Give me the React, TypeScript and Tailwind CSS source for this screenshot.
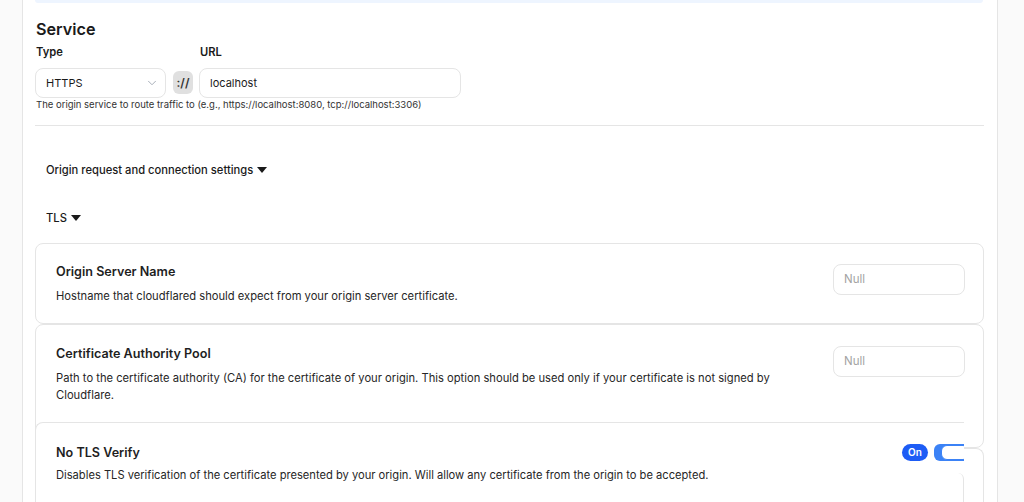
import { ChevronDown } from "lucide-react";

interface Setting {
  title: string;
  description: string;
}

const settings: Setting[] = [
  {
    title: "Origin Server Name",
    description:
      "Hostname that cloudflared should expect from your origin server certificate.",
  },
  {
    title: "Certificate Authority Pool",
    description:
      "Path to the certificate authority (CA) for the certificate of your origin. This option should be used only if your certificate is not signed by Cloudflare.",
  },
];

function Caret() {
  return (
    <svg width="10" height="6" viewBox="0 0 10 6" className="ml-[4px] inline-block">
      <path d="M0 0 L10 0 L5 6 Z" fill="#1a1a1a" />
    </svg>
  );
}

function SettingCard({ setting, tall }: { setting: Setting; tall?: boolean }) {
  return (
    <div
      className={`flex gap-5 rounded-lg border border-[#e5e5e5] bg-white pl-5 pr-[18px] ${
        tall ? "h-[124px] pt-[20px]" : "h-[81px] pt-[19px]"
      }`}
    >
      <div className="flex-1">
        <div className="text-[12.6px] leading-[18px] font-semibold text-[#1f1f1f]">
          {setting.title}
        </div>
        <div className="mt-[7px] text-[11.2px] leading-[17px] text-[#262626]">
          {setting.description}
        </div>
      </div>
      <div className="mt-[1px] flex h-[31px] w-[132px] items-center rounded-lg border border-[#e5e5e5] px-[10px] text-[11.5px] text-[#a3a3a3]">
        Null
      </div>
    </div>
  );
}

export default function App() {
  return (
    <div
      className="flex min-h-screen bg-[#fafafa]"
      style={{ fontFamily: "Inter, 'Noto Sans', sans-serif" }}
    >
      <div className="w-[23px] shrink-0 border-r border-[#e5e5e5]" />
      <main className="w-[975px] shrink-0 border-r border-[#e5e5e5] bg-white pl-[12px] pr-[13px] text-[#1a1a1a]">
        <div className="h-[3px] w-[948px] rounded-b-lg bg-[#eef5ff]" />

        <h2 className="mt-[12px] pl-[1px] text-[16.2px] leading-[28px] font-semibold">Service</h2>

        <div className="mt-[1px] flex">
          <div className="w-[138px] shrink-0">
            <div className="pl-[1px] text-[11.2px] leading-[16px] font-semibold">Type</div>
            <div className="mt-[8px] flex h-[30px] w-[131px] items-center justify-between rounded-lg border border-[#e5e5e5] pl-[10px] pr-[6px] text-[11px]">
              <span>HTTPS</span>
              <ChevronDown size={14} strokeWidth={1.5} className="text-[#9ca3af]" />
            </div>
          </div>
          <div className="w-[26px] shrink-0 pt-[27px]">
            <div className="flex h-[23px] w-[20px] items-center justify-center rounded-md bg-[#e0e0e0] text-[12px] font-semibold text-[#333]">
              ://
            </div>
          </div>
          <div>
            <div className="pl-[1px] text-[11.2px] leading-[16px] font-semibold">URL</div>
            <div className="mt-[8px] flex h-[30px] w-[262px] items-center rounded-lg border border-[#e5e5e5] px-[10px] text-[11px]">
              localhost
            </div>
          </div>
        </div>
        <p className="pl-[1px] text-[9.5px] leading-[14px] text-[#333]">
          The origin service to route traffic to (e.g., https://localhost:8080, tcp://localhost:3306)
        </p>

        <div className="mt-[13px] border-t border-[#e5e5e5]" />

        <div className="mt-[36px] flex items-center pl-[11px] text-[11.2px] leading-[16px] font-medium">
          Origin request and connection settings
          <Caret />
        </div>

        <div className="mt-[32px] flex items-center pl-[11px] text-[11.2px] leading-[16px] font-medium">
          TLS
          <Caret />
        </div>

        <div className="mt-[17px]">
          {settings.map((s, i) => (
            <SettingCard key={s.title} setting={s} tall={i === 1} />
          ))}

          <div className="flex">
            <div className="relative -mt-[26px] flex h-[81px] flex-1 overflow-hidden rounded-tl-lg border-t border-l border-[#e5e5e5] bg-white pl-5 pt-[21px]">
              <div className="flex-1">
                <div className="text-[12.6px] leading-[18px] font-semibold text-[#1f1f1f]">
                  No TLS Verify
                </div>
                <div className="mt-[5px] text-[11.15px] leading-[17px] text-[#262626]">
                  Disables TLS verification of the certificate presented by your origin. Will allow any certificate from the origin to be accepted.
                </div>
              </div>
              <div className="flex w-[62px] flex-col">
                <div className="-mr-[6px] flex items-center gap-[6px]">
                  <span className="flex h-[17px] w-[26px] items-center justify-center rounded-full bg-[#1d5cf5] text-[10px] font-semibold text-white">
                    On
                  </span>
                  <span className="flex h-[17px] w-[36px] items-center rounded-md bg-[#3b82f6] pl-[7px] pr-[1px]">
                    <span className="h-[15px] w-full rounded-md border border-[#3b82f6] bg-white" />
                  </span>
                </div>
                <div className="mt-[12px] flex-1 rounded-tr-md border-r border-[#e5e5e5]" />
              </div>
            </div>
            <div className="mt-0 h-[55px] w-[20px] rounded-tr-lg border-t border-r border-[#e5e5e5]" />
          </div>
        </div>
      </main>
    </div>
  );
}
